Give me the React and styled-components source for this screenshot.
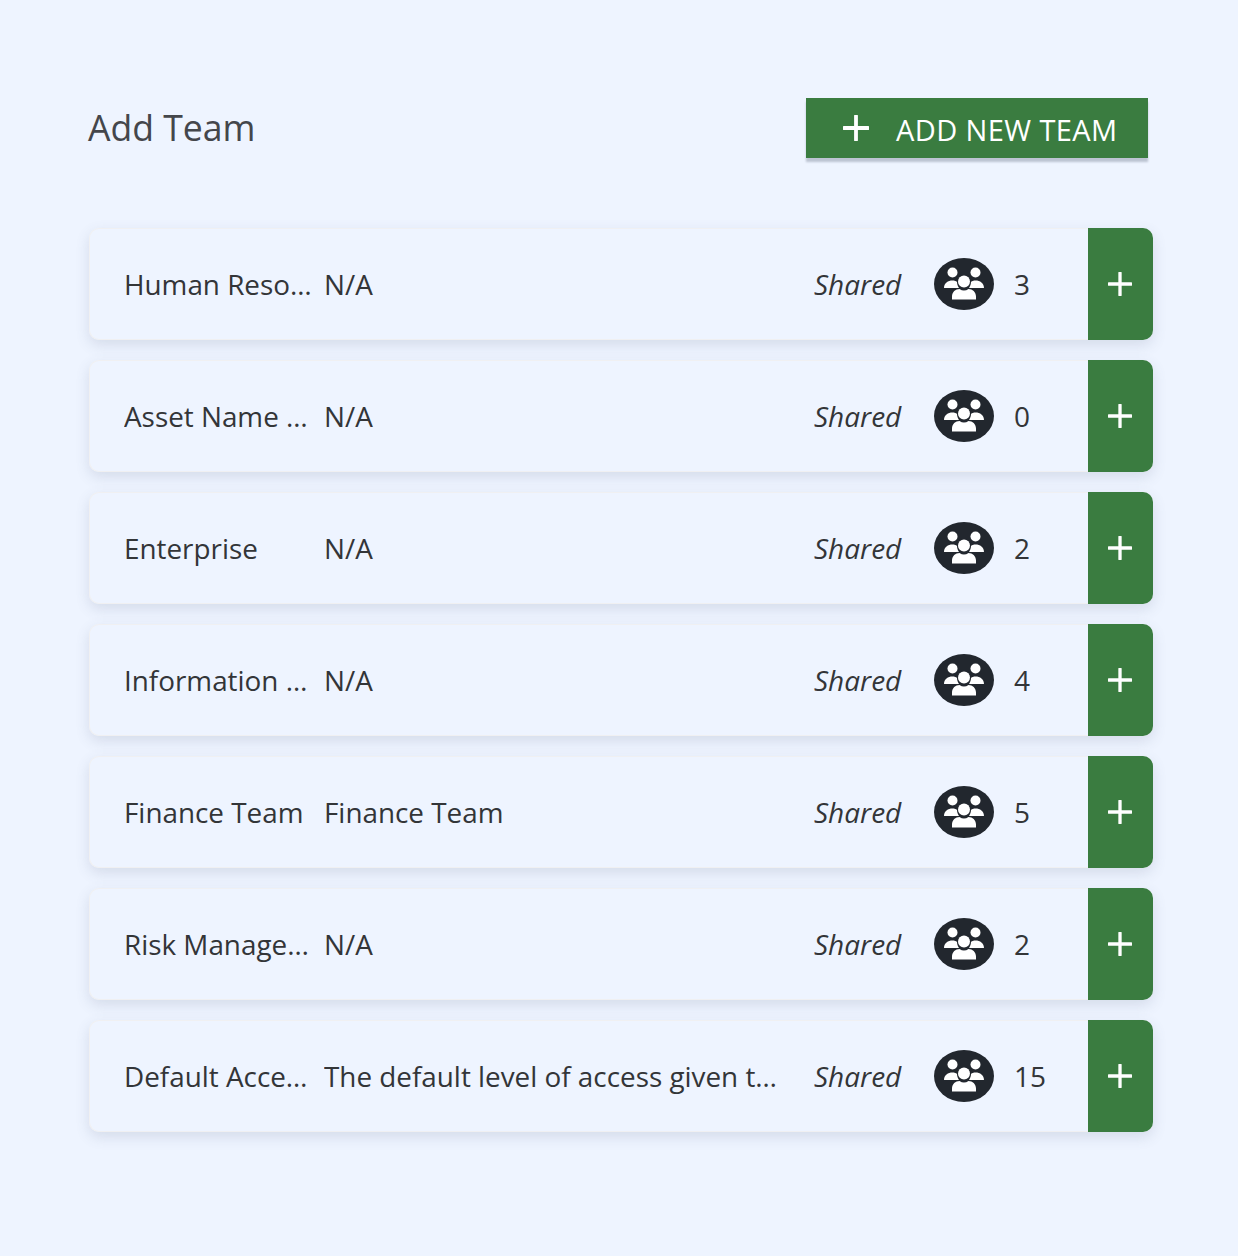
import React from 'react';
import styled, { createGlobalStyle } from 'styled-components';

const GlobalStyle = createGlobalStyle`
    html, body {
        margin: 0;
        padding: 0;
        background-color: #eef4ff;
        font-family: "Open Sans", "Liberation Sans", sans-serif;
    }
`
const Page = styled.div`
    width: 1238px;
    height: 1256px;
    box-sizing: border-box;
    padding: 98px 85px 0 88px;
`
const Header = styled.header`
    display: flex;
    justify-content: space-between;
    align-items: center;
    height: 60px;
    padding-right: 5px;
    margin-bottom: 70px;
`
const Title = styled.h1`
    margin: 0 0 2px;
    font-size: 35.6px;
    font-weight: 400;
    color: #44464b;
`
const AddButton = styled.button`
    display: flex;
    align-items: center;
    gap: 27px;
    width: 342px;
    height: 60px;
    box-sizing: border-box;
    padding: 0 0 0 37px;
    border: 0;
    background-color: #3a7c40;
    box-shadow: 0 4px 2px #bcc4d2;
    color: #ffffff;
    font-family: inherit;
    font-size: 29px;
    letter-spacing: 0.4px;
    white-space: nowrap;
`
const ButtonLabel = styled.span`
    position: relative;
    top: 1px;
`
const TeamList = styled.div`
    display: flex;
    flex-direction: column;
    gap: 20px;
    margin-left: 1px;
`
const TeamCard = styled.div`
    display: flex;
    align-items: center;
    height: 112px;
    padding-left: 35px;
    border-radius: 10px;
    background-color: #eef4ff;
    box-shadow: inset 0 0 0 1px #f0f0f2, 0 5px 14px rgba(80, 95, 125, 0.16);
    color: #333538;
    font-size: 28px;
`
const Cell = styled.div`
    flex: none;
    box-sizing: border-box;
    width: ${props => props.$width}px;
    padding-right: ${props => props.$gap || 0}px;
    overflow: hidden;
    font-size: 27.85px;
    white-space: nowrap;
    text-overflow: ellipsis;
`
const Shared = styled.div`
    flex: none;
    width: 120px;
    margin-left: 34px;
    font-style: italic;
`
const MemberIcon = styled.svg`
    flex: none;
    width: 60px;
    height: 52px;
    margin-right: 20px;
`
const Count = styled.div`
    flex: 1;
`
const CardButton = styled.button`
    display: flex;
    align-items: center;
    justify-content: center;
    flex: none;
    width: 65px;
    height: 112px;
    padding: 0 1px 0 0;
    border: 0;
    border-radius: 0 10px 10px 0;
    background-color: #3a7c40;
`

const teams = [
    { name: 'Human Resources', description: 'N/A', count: 3 },
    { name: 'Asset Name Owners', description: 'N/A', count: 0 },
    { name: 'Enterprise', description: 'N/A', count: 2 },
    { name: 'Information Security', description: 'N/A', count: 4 },
    { name: 'Finance Team', description: 'Finance Team', count: 5 },
    { name: 'Risk Management', description: 'N/A', count: 2 },
    { name: 'Default Access', description: 'The default level of access given to all new users', count: 15 },
];

const Plus = ({ size, weight }) => (
    <svg width={size} height={size} viewBox="0 0 26 26">
        <path d="M13 1v24M1 13h24" stroke="#ffffff" strokeWidth={weight} strokeLinecap="round" fill="none" />
    </svg>
);

const People = () => (
    <MemberIcon viewBox="0 0 60 52">
        <ellipse cx="30" cy="26" rx="30" ry="26" fill="#22272e" />
        <g fill="#ffffff">
            <circle cx="18.5" cy="14.5" r="5" />
            <circle cx="41.5" cy="14.5" r="5" />
            <path d="M10 30c0-5 4-7.500 8.500-7.500 2 0 3.500.5 4.500 1.500 0 2 .7 4 2 6z" />
            <path d="M50 30c0-5-4-7.500-8.500-7.500-2 0-3.500.5-4.500 1.500 0 2-.7 4-2 6z" />
            <circle cx="30" cy="23.500" r="6" />
            <path d="M18 41.500v-3c0-4.500 3.500-7.500 7.500-7.500 1.500 1 3 1.500 4.500 1.500s3-.5 4.500-1.500c4 0 7.500 3 7.500 7.500v3z" />
        </g>
    </MemberIcon>
);

export default function App() {
    return (
        <Page>
            <GlobalStyle />
            <Header>
                <Title>Add Team</Title>
                <AddButton>
                    <Plus size={26} weight={3.8} />
                    <ButtonLabel>ADD NEW TEAM</ButtonLabel>
                </AddButton>
            </Header>
            <TeamList>
                {teams.map(team => (
                    <TeamCard key={team.name}>
                        <Cell $width={200} $gap={12}>{team.name}</Cell>
                        <Cell $width={456}>{team.description}</Cell>
                        <Shared>Shared</Shared>
                        <People />
                        <Count>{team.count}</Count>
                        <CardButton><Plus size={24} weight={3.6} /></CardButton>
                    </TeamCard>
                ))}
            </TeamList>
        </Page>
    );
}
